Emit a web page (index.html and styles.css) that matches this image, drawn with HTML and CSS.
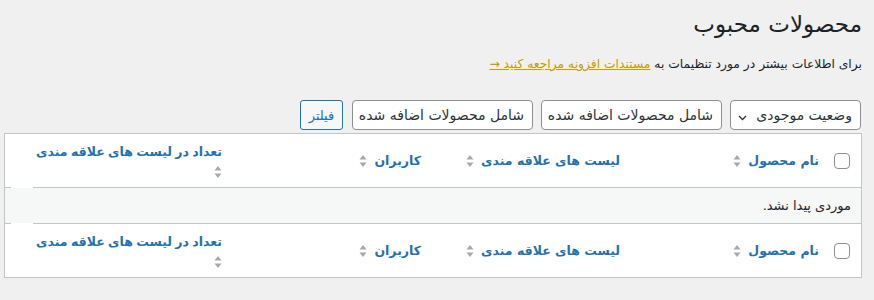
FILE: index.html
```html
<!DOCTYPE html>
<html lang="fa" dir="rtl">
<head>
<meta charset="utf-8">
<title>محصولات محبوب</title>
<link rel="stylesheet" href="styles.css">
</head>
<body>
<div class="wrap">
  <h1 class="title">محصولات محبوب</h1>
  <p class="intro">برای اطلاعات بیشتر در مورد تنظیمات به <a href="#">مستندات افزونه مراجعه کنید →</a></p>
  <div class="tablenav">
    <div class="select sel-stock">
      <span class="clip">وضعیت موجودی</span>
      <svg class="chev" width="9" height="6" viewBox="0 0 9 6"><path d="M1 1l3.5 3.5L8 1" fill="none" stroke="#2c3338" stroke-width="1.3"/></svg>
    </div>
    <div class="select sel-date"><span class="clip">شامل محصولات اضافه شده پس از</span></div>
    <div class="select sel-date"><span class="clip">شامل محصولات اضافه شده قبل از</span></div>
    <button class="btn-filter" type="button">فیلتر</button>
  </div>
  <table class="list">
    <colgroup>
      <col class="c-cb"><col class="c-col"><col class="c-col"><col class="c-col"><col class="c-col"><col class="c-fill">
    </colgroup>
    <thead>
      <tr>
        <th class="cb"><span class="box"></span></th>
        <th><a href="#">نام محصول</a><svg class="sort" width="8" height="14" viewBox="0 0 8 14"><path d="M4 1L7.5 5.5H0.5Z M4 13L7.5 8.5H0.5Z" fill="#a7aaad"/></svg></th>
        <th><a href="#">لیست های علاقه مندی</a><svg class="sort" width="8" height="14" viewBox="0 0 8 14"><path d="M4 1L7.5 5.5H0.5Z M4 13L7.5 8.5H0.5Z" fill="#a7aaad"/></svg></th>
        <th><a href="#">کاربران</a><svg class="sort" width="8" height="14" viewBox="0 0 8 14"><path d="M4 1L7.5 5.5H0.5Z M4 13L7.5 8.5H0.5Z" fill="#a7aaad"/></svg></th>
        <th class="stack"><a href="#">تعداد در لیست های علاقه مندی</a><svg class="sort" width="8" height="14" viewBox="0 0 8 14"><path d="M4 1L7.5 5.5H0.5Z M4 13L7.5 8.5H0.5Z" fill="#a7aaad"/></svg></th>
        <th class="fill"></th>
      </tr>
    </thead>
    <tbody>
      <tr class="empty"><td colspan="6">موردی پیدا نشد.</td></tr>
    </tbody>
    <tfoot>
      <tr>
        <th class="cb"><span class="box"></span></th>
        <th><a href="#">نام محصول</a><svg class="sort" width="8" height="14" viewBox="0 0 8 14"><path d="M4 1L7.5 5.5H0.5Z M4 13L7.5 8.5H0.5Z" fill="#a7aaad"/></svg></th>
        <th><a href="#">لیست های علاقه مندی</a><svg class="sort" width="8" height="14" viewBox="0 0 8 14"><path d="M4 1L7.5 5.5H0.5Z M4 13L7.5 8.5H0.5Z" fill="#a7aaad"/></svg></th>
        <th><a href="#">کاربران</a><svg class="sort" width="8" height="14" viewBox="0 0 8 14"><path d="M4 1L7.5 5.5H0.5Z M4 13L7.5 8.5H0.5Z" fill="#a7aaad"/></svg></th>
        <th class="stack"><a href="#">تعداد در لیست های علاقه مندی</a><svg class="sort" width="8" height="14" viewBox="0 0 8 14"><path d="M4 1L7.5 5.5H0.5Z M4 13L7.5 8.5H0.5Z" fill="#a7aaad"/></svg></th>
        <th class="fill"></th>
      </tr>
    </tfoot>
  </table>
</div>
</body>
</html>
```

FILE: styles.css
```css
* { box-sizing: border-box; }
html, body { margin: 0; background: #f0f0f1; }
body {
  font-family: "DejaVu Sans", sans-serif;
  color: #1d2327;
  font-size: 13px;
}
.wrap { margin: 0 12px 0 4px; padding-top: 9px; }
.title {
  margin: 0;
  font-size: 23px;
  font-weight: 400;
  line-height: 30px;
  color: #1d2327;
}
.intro {
  margin: 15px 0 0;
  line-height: 20px;
  font-size: 12.3px;
  color: #1d2327;
}
.intro a { color: #c69c00; text-decoration: underline; }
.tablenav {
  display: flex;
  gap: 8px;
  margin: 26px 1px 0 0;
  height: 30px;
}
.select {
  background: #fff;
  border: 1px solid #8c8f94;
  border-radius: 4px;
  color: #2c3338;
  display: flex;
  align-items: center;
  padding: 0 8px 0 7px;
  font-size: 14px;
}
.sel-stock { width: 131px; justify-content: space-between; }
.sel-date { width: 181px; padding-left: 4px; }
.clip { display: block; overflow: hidden; white-space: nowrap; }
.chev { flex: none; margin-top: 5px; }
.btn-filter {
  width: 43px;
  margin-right: 1px;
  padding: 0;
  border: 1px solid #2271b1;
  border-radius: 3px;
  background: #f6f7f7;
  color: #2271b1;
  font-family: inherit;
  font-size: 13px;
}
.list {
  width: 100%;
  margin-top: 3px;
  border: 1px solid #c3c4c7;
  border-collapse: separate;
  border-spacing: 0;
  background: #fff;
  table-layout: fixed;
}
.c-cb { width: 32px; }
.c-col { width: 199px; }
.list th {
  padding: 8px 10px;
  text-align: right;
  vertical-align: middle;
  font-weight: 400;
  line-height: 20px;
}
.list thead th { border-bottom: 1px solid #c3c4c7; }
.list tfoot th { border-top: 1px solid #c3c4c7; }
.list thead th.fill {
  border-bottom: 1px solid transparent;
  background: linear-gradient(to right, #c3c4c7 6px, #fff 6px) left bottom / 100% 1px no-repeat border-box, #fff;
}
.list tfoot th.fill {
  border-top: 1px solid transparent;
  background: linear-gradient(to right, #c3c4c7 6px, #fff 6px) left top / 100% 1px no-repeat border-box, #fff;
}
.list th a {
  color: #2271b1;
  text-decoration: none;
  font-weight: 700;
  font-size: 12.5px;
}
.sort { margin-right: 7px; vertical-align: middle; }
.stack { white-space: nowrap; }
.stack a { word-spacing: -1px; }
.stack .sort { display: block; margin: 3px 0 0; }
.list th.cb { padding: 8px 11px 8px 0; }
.box {
  display: block;
  width: 16px;
  height: 16px;
  border: 1px solid #8c8f94;
  border-radius: 4px;
  background: #fff;
}
.empty td {
  background: #f6f7f7;
  padding: 8px 10px;
  line-height: 19px;
  color: #1d2327;
}
```
